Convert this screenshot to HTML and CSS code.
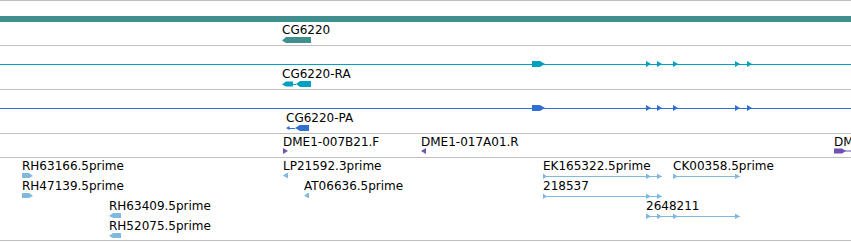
FILE: index.html
```html
<!DOCTYPE html>
<html>
<head>
<meta charset="utf-8">
<link rel="stylesheet" href="styles.css">
</head>
<body>
<div class="panel">
  <!-- Gene track -->
  <section class="track track-gene">
    <div class="span-bar"></div>
    <div class="lane">
      <div class="feature" style="left:282px">
        <span class="label">CG6220</span>
        <svg class="glyph" width="29" height="6" viewBox="0 0 29 6"><polygon class="c-gene" points="0,3.5 4,0 29,0 29,6 4,6"/></svg>
      </div>
    </div>
  </section>

  <!-- mRNA track -->
  <section class="track track-tx">
    <svg class="overview" width="851" height="6" viewBox="0 0 851 6">
      <g class="c-rna">
        <rect x="0" y="3" width="851" height="1"/>
        <polygon points="532,0 540,0 545,3 540,6 532,6"/>
        <polygon points="646,0 651,3 646,6"/>
        <polygon points="657,0 662,3 657,6"/>
        <polygon points="673,0 678,3 673,6"/>
        <polygon points="735,0 740,3 735,6"/>
        <polygon points="747,0 752,3 747,6"/>
      </g>
    </svg>
    <div class="lane">
      <div class="feature" style="left:282px">
        <span class="label">CG6220-RA</span>
        <svg class="glyph" width="29" height="6" viewBox="0 0 29 6"><g class="c-rna"><polygon points="0,3.5 4,0.5 11,0.5 11,5.5 4,5.5"/><rect x="11" y="3" width="3" height="1"/><polygon points="14,3 18,0 29,0 29,6 18,6"/></g></svg>
      </div>
    </div>
  </section>

  <!-- Protein track -->
  <section class="track track-tx">
    <svg class="overview" width="851" height="6" viewBox="0 0 851 6">
      <g class="c-prot">
        <rect x="0" y="3" width="851" height="1"/>
        <polygon points="532,0 540,0 545,3 540,6 532,6"/>
        <polygon points="646,0 651,3 646,6"/>
        <polygon points="657,0 662,3 657,6"/>
        <polygon points="673,0 678,3 673,6"/>
        <polygon points="735,0 740,3 735,6"/>
        <polygon points="747,0 752,3 747,6"/>
      </g>
    </svg>
    <div class="lane">
      <div class="feature" style="left:286px">
        <span class="label">CG6220-PA</span>
        <svg class="glyph" width="23" height="6" viewBox="0 0 23 6"><g class="c-prot"><polygon points="0,3 3.5,1 3.5,5"/><rect x="3" y="3" width="6" height="1"/><polygon points="9,3 14,0 23,0 23,6 14,6"/></g></svg>
      </div>
    </div>
  </section>

  <!-- BAC ends -->
  <section class="track track-bac">
    <div class="lane">
      <div class="feature" style="left:283px">
        <span class="label">DME1-007B21.F</span>
        <svg class="glyph" width="5" height="6" viewBox="0 0 5 6"><polygon class="c-bac" points="0,0 5,3 0,6"/></svg>
      </div>
      <div class="feature" style="left:421px">
        <span class="label">DME1-017A01.R</span>
        <svg class="glyph" width="5" height="6" viewBox="0 0 5 6"><polygon class="c-bac" points="5,0 0,3 5,6"/></svg>
      </div>
      <div class="feature" style="left:834px">
        <span class="label">DME1-</span>
        <svg class="glyph" width="17" height="6" viewBox="0 0 17 6"><g class="c-bac"><polygon points="0,0.5 8,0.5 12,3 8,5.5 0,5.5"/><rect x="11" y="2.5" width="6" height="1"/></g></svg>
      </div>
    </div>
  </section>

  <!-- ESTs -->
  <section class="track track-est">
    <div class="lane">
      <div class="feature" style="left:22px">
        <span class="label">RH63166.5prime</span>
        <svg class="glyph" width="12" height="6" viewBox="0 0 12 6"><polygon class="c-est" points="0,0 7,0 11,3 7,5 0,5"/></svg>
      </div>
      <div class="feature" style="left:283px">
        <span class="label">LP21592.3prime</span>
        <svg class="glyph" width="6" height="6" viewBox="0 0 6 6"><polygon class="c-est" points="0,2.5 4,0 5,0 5,5 4,5"/></svg>
      </div>
      <div class="feature" style="left:543px">
        <span class="label">EK165322.5prime</span>
        <svg class="glyph" width="119" height="6" viewBox="0 0 119 6"><g class="c-est"><rect x="0" y="3" width="119" height="1"/><polygon points="0,0.5 4,3.5 0,6"/><polygon points="103,0.5 108,3.5 103,6"/><polygon points="114,0.5 119,3.5 114,6"/></g></svg>
      </div>
      <div class="feature" style="left:673px">
        <span class="label">CK00358.5prime</span>
        <svg class="glyph" width="67" height="6" viewBox="0 0 67 6"><g class="c-est"><rect x="0" y="3" width="67" height="1"/><polygon points="0,0.5 5,3.5 0,6"/><polygon points="62,0.5 67,3.5 62,6"/></g></svg>
      </div>
    </div>
    <div class="lane">
      <div class="feature" style="left:22px">
        <span class="label">RH47139.5prime</span>
        <svg class="glyph" width="12" height="6" viewBox="0 0 12 6"><polygon class="c-est" points="0,0 7,0 11,3 7,5 0,5"/></svg>
      </div>
      <div class="feature" style="left:304px">
        <span class="label">AT06636.5prime</span>
        <svg class="glyph" width="6" height="6" viewBox="0 0 6 6"><polygon class="c-est" points="0,2.5 4,0 5,0 5,5 4,5"/></svg>
      </div>
      <div class="feature" style="left:543px">
        <span class="label">218537</span>
        <svg class="glyph" width="119" height="6" viewBox="0 0 119 6"><g class="c-est"><rect x="0" y="3" width="119" height="1"/><polygon points="0,0.5 4,3.5 0,6"/><polygon points="103,0.5 108,3.5 103,6"/><polygon points="114,0.5 119,3.5 114,6"/></g></svg>
      </div>
    </div>
    <div class="lane">
      <div class="feature" style="left:109px">
        <span class="label">RH63409.5prime</span>
        <svg class="glyph" width="12" height="6" viewBox="0 0 12 6"><polygon class="c-est" points="0,3 4,0 12,0 12,5 4,5"/></svg>
      </div>
      <div class="feature" style="left:646px">
        <span class="label">2648211</span>
        <svg class="glyph" width="94" height="6" viewBox="0 0 94 6"><g class="c-est"><rect x="0" y="3" width="94" height="1"/><polygon points="0,0.5 5,3.5 0,6"/><polygon points="11,0.5 16,3.5 11,6"/><polygon points="27,0.5 32,3.5 27,6"/><polygon points="89,0.5 94,3.5 89,6"/></g></svg>
      </div>
    </div>
    <div class="lane">
      <div class="feature" style="left:109px">
        <span class="label">RH52075.5prime</span>
        <svg class="glyph" width="12" height="6" viewBox="0 0 12 6"><polygon class="c-est" points="0,3 4,0 12,0 12,5 4,5"/></svg>
      </div>
    </div>
  </section>
</div>
</body>
</html>
```

FILE: styles.css
```css
html, body {
  margin: 0;
  padding: 0;
  background: #ffffff;
}

body {
  width: 851px;
  height: 242px;
  overflow: hidden;
  font-family: "DejaVu Sans", "Liberation Sans", sans-serif;
  font-size: 12px;
  color: #000000;
}

.panel {
  width: 851px;
  display: flex;
  flex-direction: column;
}

.track {
  border-top: 1px solid #c0c0c0;
  display: flex;
  flex-direction: column;
  overflow: hidden;
}

.track-gene {
  height: 44px;
  padding-top: 15px;
  box-sizing: content-box;
  height: 29px;
}

.span-bar {
  height: 6px;
  background: #3f8f8f;
  margin-bottom: 2px;
}

.track-tx {
  padding-top: 15px;
  height: 28px;
}

.overview {
  display: block;
  margin-bottom: 1px;
}

.track-bac {
  padding-top: 2px;
  height: 21px;
}

.track-bac .lane {
  height: 18px;
}

.track-bac .glyph {
  margin-top: 0;
}

.track-est {
  padding-top: 2px;
  height: 80px;
  border-bottom: 1px solid #c0c0c0;
}

.track-est .lane {
  height: 20px;
}

.lane {
  position: relative;
  height: 19px;
  flex: none;
}

.feature {
  position: absolute;
  top: 0;
  display: flex;
  flex-direction: column;
  align-items: flex-start;
  white-space: nowrap;
}

.label {
  display: block;
  line-height: 12px;
  height: 12px;
}

.glyph {
  display: block;
  margin-top: 1px;
}

.c-gene { fill: #3f8f8f; }
.c-rna { fill: #00a0c0; }
.c-prot { fill: #3070d0; }
.c-bac { fill: #7050b0; }
.c-est { fill: #80b8e0; }
```
